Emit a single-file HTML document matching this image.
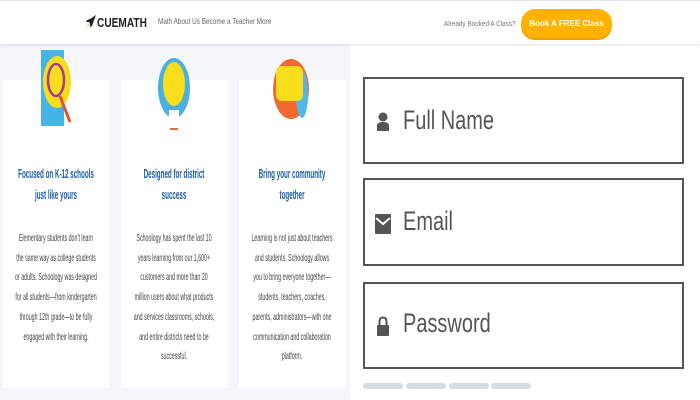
<!DOCTYPE html>
<html><head><style>
*{margin:0;padding:0;box-sizing:border-box}
html,body{width:700px;height:400px;overflow:hidden}
body{background:#fff;font-family:"Liberation Sans",sans-serif;position:relative}
.left{position:absolute;left:0;top:0;width:350px;height:400px;background:#f4f6f9}
.hdr{position:absolute;left:0;top:0;width:700px;height:44px;background:#fff;box-shadow:0 1px 3px rgba(0,0,0,.12);border-top:1px solid #e5e5e5;z-index:5}
.card{position:absolute;top:80px;height:308px;background:#fff}
.t,.b{position:absolute;width:200px;white-space:nowrap;text-align:center;transform-origin:center top}
.t{top:164px;font-weight:bold;color:#1a5ea6;font-size:12.5px;line-height:21px;transform:scaleX(.5)}
.b{top:229px;color:#444;font-size:10px;line-height:19.7px;transform:scaleX(.53)}
.box{position:absolute;left:363px;width:321px;border:2px solid #555;background:#fff}
.lbl{position:absolute;left:38px;font-size:27px;color:#555;transform:scaleX(.74);transform-origin:left;white-space:nowrap}
.bar{position:absolute;top:383px;height:6px;width:40px;background:#d8dde3;border-radius:3px}
</style></head><body>
<div class="left"></div>
<div class="hdr">
 <svg style="position:absolute;left:86px;top:14px" width="11" height="13" viewBox="0 0 11 13"><path d="M10 0 L4 4 L1 5 L0 7 L3 7 L4 9 L4 12 L6 11 L7 8 Z" fill="#222"/><path d="M1 10 L3 9 L2 12 Z" fill="#f5a623"/></svg>
 <div style="position:absolute;left:97px;top:14px;font-size:13px;font-weight:bold;color:#222;transform:scaleX(.78);transform-origin:left">CUEMATH</div>
 <div style="position:absolute;left:158px;top:16px;font-size:8px;color:#666;white-space:nowrap;transform:scaleX(.8);transform-origin:left">Math About Us Become a Teacher More</div>
 <div style="position:absolute;left:444px;top:18px;font-size:7.5px;color:#777;white-space:nowrap;transform:scaleX(.85);transform-origin:left">Already Booked A Class?</div>
 <div style="position:absolute;left:521px;top:8px;width:91px;height:29px;background:#ffb300;border-radius:14px;box-shadow:0 2px 0 #f59c00;color:#fff;font-size:8px;font-weight:bold;text-align:center;line-height:29px">Book A FREE Class</div>
</div>
<div class="card" style="left:3px;width:106px"></div>
<div class="card" style="left:121px;width:107px"></div>
<div class="card" style="left:239px;width:107px"></div>
<svg style="position:absolute;left:0;top:44px" width="350" height="90">
 <rect x="41" y="6" width="23" height="76" fill="#44b3e8"/>
 <ellipse cx="57" cy="38" rx="14" ry="26" fill="#f7dd1a"/>
 <ellipse cx="56" cy="36" rx="8" ry="16" fill="none" stroke="#a63c8c" stroke-width="2.5"/>
 <line x1="60" y1="52" x2="70" y2="78" stroke="#d9533b" stroke-width="3"/>
 <ellipse cx="174" cy="44" rx="16" ry="30" fill="#4bb0e0"/>
 <ellipse cx="174" cy="40" rx="11" ry="22" fill="#f7dd1a"/>
 <rect x="169" y="66" width="10" height="12" fill="#fff"/>
 <rect x="170" y="84" width="8" height="2" fill="#e06a4a"/>
 <ellipse cx="291" cy="45" rx="18" ry="30" fill="#f0692e"/>
 <ellipse cx="302" cy="50" rx="6" ry="24" fill="#52b7e6"/>
 <rect x="276" y="22" width="27" height="35" rx="6" fill="#f7dd1a"/>
</svg>
<div class="t" style="left:-44px">Focused on K-12 schools<br>just like yours</div>
<div class="t" style="left:74px">Designed for district<br>success</div>
<div class="t" style="left:192px">Bring your community<br>together</div>
<div class="b" style="left:-44px">Elementary students don't learn<br>the same way as college students<br>or adults. Schoology was designed<br>for all students—from kindergarten<br>through 12th grade—to be fully<br>engaged with their learning.</div>
<div class="b" style="left:74px">Schoology has spent the last 10<br>years learning from our 1,600+<br>customers and more than 20<br>million users about what products<br>and services classrooms, schools,<br>and entire districts need to be<br>successful.</div>
<div class="b" style="left:192px">Learning is not just about teachers<br>and students. Schoology allows<br>you to bring everyone together—<br>students, teachers, coaches,<br>parents, administrators—with one<br>communication and collaboration<br>platform.</div>
<div class="box" style="top:77px;height:87px">
 <svg style="position:absolute;left:12px;top:33px" width="12" height="20"><circle cx="6" cy="5" r="4.5" fill="#555"/><path d="M0 19 L0 14 Q0 10 6 10 Q12 10 12 14 L12 19Z" fill="#555"/></svg>
 <div class="lbl" style="top:26px">Full Name</div>
</div>
<div class="box" style="top:178px;height:88px">
 <svg style="position:absolute;left:10px;top:32px" width="16" height="22"><rect x="0" y="2" width="16" height="20" rx="1" fill="#555"/><path d="M1 6 L8 12 L15 6" fill="none" stroke="#fff" stroke-width="2"/></svg>
 <div class="lbl" style="top:26px">Email</div>
</div>
<div class="box" style="top:282px;height:87px">
 <svg style="position:absolute;left:12px;top:32px" width="12" height="20"><path d="M2.5 9 V6 Q2.5 1.5 6 1.5 Q9.5 1.5 9.5 6 V9" fill="none" stroke="#555" stroke-width="2"/><rect x="0" y="9" width="12" height="11" rx="1" fill="#555"/></svg>
 <div class="lbl" style="top:24px">Password</div>
</div>
<div class="bar" style="left:363px"></div>
<div class="bar" style="left:406px"></div>
<div class="bar" style="left:449px"></div>
<div class="bar" style="left:491px"></div>
</body></html>
